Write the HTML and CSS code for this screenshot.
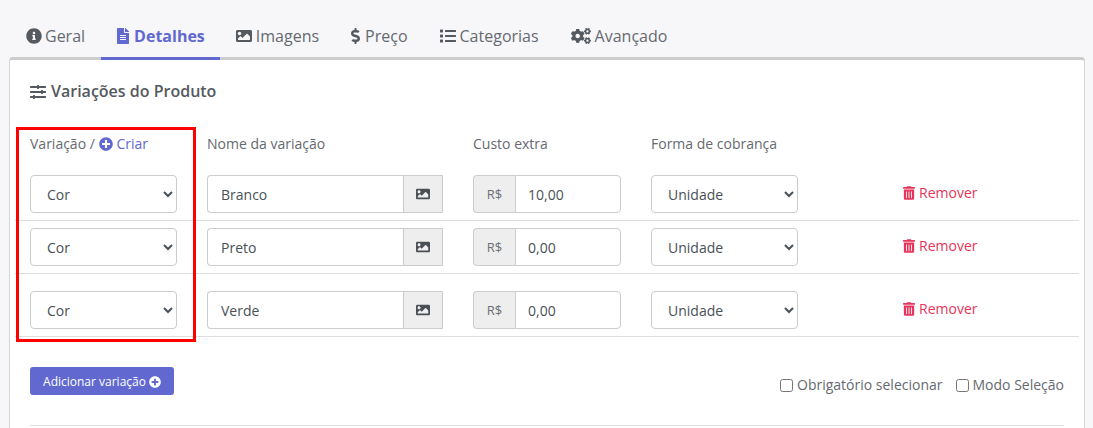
FILE: index.html
```html
<!DOCTYPE html>
<html lang="pt">
<head>
<meta charset="utf-8">
<title>Variações do Produto</title>
<link rel="stylesheet" href="styles.css">
</head>
<body>
<svg class="defs" aria-hidden="true">
  <symbol id="i-info" viewBox="0 0 512 512"><path d="M256 8C119.043 8 8 119.083 8 256c0 136.997 111.043 248 248 248s248-111.003 248-248C504 119.083 392.957 8 256 8zm0 110c23.196 0 42 18.804 42 42s-18.804 42-42 42-42-18.804-42-42 18.804-42 42-42zm56 254c0 6.627-5.373 12-12 12h-88c-6.627 0-12-5.373-12-12v-24c0-6.627 5.373-12 12-12h12v-64h-12c-6.627 0-12-5.373-12-12v-24c0-6.627 5.373-12 12-12h64c6.627 0 12 5.373 12 12v100h12c6.627 0 12 5.373 12 12v24z"/></symbol>
  <symbol id="i-file" viewBox="0 0 384 512"><path d="M224 136V0H24C10.7 0 0 10.7 0 24v464c0 13.3 10.7 24 24 24h336c13.3 0 24-10.7 24-24V160H248c-13.2 0-24-10.8-24-24zm64 236c0 6.6-5.4 12-12 12H108c-6.6 0-12-5.4-12-12v-8c0-6.6 5.4-12 12-12h168c6.6 0 12 5.4 12 12v8zm0-64c0 6.6-5.4 12-12 12H108c-6.6 0-12-5.4-12-12v-8c0-6.6 5.4-12 12-12h168c6.6 0 12 5.4 12 12v8zm0-72v8c0 6.6-5.4 12-12 12H108c-6.6 0-12-5.4-12-12v-8c0-6.6 5.4-12 12-12h168c6.6 0 12 5.4 12 12zm96-114.1v6.1H256V0h6.1c6.4 0 12.5 2.5 17 7l97.9 98c4.5 4.5 7 10.6 7 16.9z"/></symbol>
  <symbol id="i-image" viewBox="0 0 512 512"><path d="M464 448H48c-26.51 0-48-21.49-48-48V112c0-26.51 21.49-48 48-48h416c26.51 0 48 21.49 48 48v288c0 26.51-21.49 48-48 48zM112 120c-30.928 0-56 25.072-56 56s25.072 56 56 56 56-25.072 56-56-25.072-56-56-56zM64 384h384V272l-87.515-87.515c-4.686-4.686-12.284-4.686-16.971 0L208 320l-55.515-55.515c-4.686-4.686-12.284-4.686-16.971 0L64 336v48z"/></symbol>
  <symbol id="i-dollar" viewBox="0 0 288 512"><path d="M209.2 233.4l-108-31.6C88.7 198.2 80 186.5 80 173.5c0-16.3 13.2-29.5 29.5-29.5h66.3c12.2 0 24.2 3.7 34.2 10.5 6.1 4.1 14.3 3.1 19.5-2l34.8-34c7.1-6.9 6.1-18.4-1.8-24.5C238 74.8 207.4 64.1 176 64V16c0-8.8-7.2-16-16-16h-32c-8.8 0-16 7.2-16 16v48h-2.5C45.8 64-5.4 118.7.5 183.6c4.2 46.1 39.4 83.6 83.8 96.6l102.5 30c12.5 3.7 21.2 15.3 21.2 28.3 0 16.3-13.2 29.5-29.5 29.5h-66.3C100 368 88 364.3 78 357.5c-6.1-4.1-14.3-3.1-19.5 2l-34.8 34c-7.1 6.9-6.1 18.4 1.8 24.5 24.5 19.2 55.1 29.9 86.5 30v48c0 8.8 7.2 16 16 16h32c8.8 0 16-7.2 16-16v-48.2c46.6-.9 90.3-28.6 105.7-72.7 21.5-61.6-14.6-124.8-72.5-141.7z"/></symbol>
  <symbol id="i-list" viewBox="0 0 512 512"><path d="M80 368H16a16 16 0 0 0-16 16v64a16 16 0 0 0 16 16h64a16 16 0 0 0 16-16v-64a16 16 0 0 0-16-16zm0-320H16A16 16 0 0 0 0 64v64a16 16 0 0 0 16 16h64a16 16 0 0 0 16-16V64a16 16 0 0 0-16-16zm0 160H16a16 16 0 0 0-16 16v64a16 16 0 0 0 16 16h64a16 16 0 0 0 16-16v-64a16 16 0 0 0-16-16zm416 176H176a16 16 0 0 0-16 16v32a16 16 0 0 0 16 16h320a16 16 0 0 0 16-16v-32a16 16 0 0 0-16-16zm0-320H176a16 16 0 0 0-16 16v32a16 16 0 0 0 16 16h320a16 16 0 0 0 16-16V80a16 16 0 0 0-16-16zm0 160H176a16 16 0 0 0-16 16v32a16 16 0 0 0 16 16h320a16 16 0 0 0 16-16v-32a16 16 0 0 0-16-16z"/></symbol>
  <symbol id="i-cogs" viewBox="0 0 640 512"><path d="M512.1 191l-8.2 14.3c-3 5.3-9.4 7.5-15.1 5.4-11.8-4.4-22.6-10.7-32.1-18.6-4.6-3.8-5.8-10.5-2.8-15.7l8.2-14.3c-6.9-8-12.3-17.3-15.9-27.4h-16.5c-6 0-11.2-4.3-12.2-10.3-2-12-2.1-24.6 0-37.1 1-6 6.2-10.4 12.2-10.4h16.5c3.6-10.1 9-19.4 15.9-27.4l-8.2-14.3c-3-5.2-1.9-11.9 2.8-15.7 9.5-7.9 20.4-14.2 32.1-18.6 5.7-2.1 12.1.1 15.1 5.4l8.2 14.3c10.5-1.9 21.2-1.9 31.7 0L552 6.3c3-5.3 9.4-7.5 15.1-5.4 11.8 4.4 22.6 10.7 32.1 18.6 4.6 3.8 5.8 10.5 2.8 15.7l-8.2 14.3c6.9 8 12.3 17.3 15.9 27.4h16.5c6 0 11.2 4.3 12.2 10.3 2 12 2.1 24.6 0 37.1-1 6-6.2 10.4-12.2 10.4h-16.5c-3.6 10.1-9 19.4-15.9 27.4l8.2 14.3c3 5.2 1.9 11.9-2.8 15.7-9.5 7.9-20.4 14.2-32.1 18.6-5.7 2.1-12.1-.1-15.1-5.4l-8.2-14.3c-10.4 1.9-21.2 1.9-31.7 0zm-10.5-58.8c38.5 29.6 82.4-14.3 52.8-52.8-38.5-29.7-82.4 14.3-52.8 52.8zM386.3 286.1l33.7 16.8c10.1 5.8 14.5 18.1 10.5 29.1-8.9 24.2-26.4 46.4-42.6 65.8-7.4 8.9-20.2 11.1-30.3 5.3l-29.1-16.8c-16 13.7-34.6 24.6-54.9 31.7v33.6c0 11.6-8.3 21.6-19.7 23.6-24.6 4.2-50.4 4.4-75.9 0-11.5-2-20-11.9-20-23.6V418c-20.3-7.2-38.9-18-54.9-31.7L74 403c-10 5.8-22.9 3.6-30.3-5.3-16.2-19.4-33.3-41.6-42.2-65.7-4-10.9.4-23.2 10.5-29.1l33.3-16.8c-3.9-20.9-3.9-42.4 0-63.4L12 205.8c-10.1-5.8-14.6-18.1-10.5-29 8.9-24.2 26-46.4 42.2-65.8 7.4-8.9 20.2-11.1 30.3-5.3l29.1 16.8c16-13.7 34.6-24.6 54.9-31.7V57.1c0-11.5 8.2-21.5 19.6-23.5 24.6-4.2 50.5-4.4 76-.1 11.5 2 20 11.9 20 23.6v33.6c20.3 7.2 38.9 18 54.9 31.7l29.1-16.8c10-5.8 22.9-3.6 30.3 5.3 16.2 19.4 33.2 41.6 42.1 65.8 4 10.9.1 23.2-10 29.1l-33.7 16.8c3.9 21 3.9 42.5 0 63.5zm-117.6 21.1c59.2-77-28.7-164.9-105.7-105.7-59.2 77 28.7 164.9 105.7 105.7zm243.4 182.7l-8.2 14.3c-3 5.3-9.4 7.5-15.1 5.4-11.8-4.4-22.6-10.7-32.1-18.6-4.6-3.8-5.8-10.5-2.8-15.7l8.2-14.3c-6.9-8-12.3-17.3-15.9-27.4h-16.5c-6 0-11.2-4.3-12.2-10.3-2-12-2.1-24.6 0-37.1 1-6 6.2-10.4 12.2-10.4h16.5c3.6-10.1 9-19.4 15.9-27.4l-8.2-14.3c-3-5.2-1.9-11.9 2.8-15.7 9.5-7.9 20.4-14.2 32.1-18.6 5.7-2.1 12.1.1 15.1 5.4l8.2 14.3c10.5-1.9 21.2-1.9 31.7 0l8.2-14.3c3-5.3 9.4-7.5 15.1-5.4 11.8 4.4 22.6 10.7 32.1 18.6 4.6 3.8 5.8 10.5 2.8 15.7l-8.2 14.3c6.9 8 12.3 17.3 15.9 27.4h16.5c6 0 11.2 4.3 12.2 10.3 2 12 2.1 24.6 0 37.1-1 6-6.2 10.4-12.2 10.4h-16.5c-3.6 10.1-9 19.4-15.9 27.4l8.2 14.3c3 5.2 1.9 11.9-2.8 15.7-9.5 7.9-20.4 14.2-32.1 18.6-5.7 2.1-12.1-.1-15.1-5.4l-8.2-14.3c-10.4 1.9-21.2 1.9-31.7 0zM501.6 431c38.5 29.6 82.4-14.3 52.8-52.8-38.5-29.6-82.4 14.3-52.8 52.8z"/></symbol>
  <symbol id="i-sliders" viewBox="0 0 512 512"><path d="M496 384H160v-16c0-8.8-7.2-16-16-16h-32c-8.8 0-16 7.2-16 16v16H16c-8.8 0-16 7.2-16 16v32c0 8.8 7.2 16 16 16h80v16c0 8.8 7.2 16 16 16h32c8.8 0 16-7.2 16-16v-16h336c8.8 0 16-7.2 16-16v-32c0-8.8-7.2-16-16-16zm0-160h-80v-16c0-8.8-7.2-16-16-16h-32c-8.8 0-16 7.2-16 16v16H16c-8.8 0-16 7.2-16 16v32c0 8.8 7.2 16 16 16h336v16c0 8.8 7.2 16 16 16h32c8.8 0 16-7.2 16-16v-16h80c8.8 0 16-7.2 16-16v-32c0-8.8-7.2-16-16-16zm0-160H288V48c0-8.8-7.2-16-16-16h-32c-8.8 0-16 7.2-16 16v16H16C7.2 64 0 71.2 0 80v32c0 8.8 7.2 16 16 16h208v16c0 8.8 7.2 16 16 16h32c8.8 0 16-7.2 16-16v-16h208c8.8 0 16-7.2 16-16V80c0-8.8-7.2-16-16-16z"/></symbol>
  <symbol id="i-plus" viewBox="0 0 512 512"><path d="M256 8C119 8 8 119 8 256s111 248 248 248 248-111 248-248S393 8 256 8zm144 276c0 6.6-5.4 12-12 12h-92v92c0 6.6-5.4 12-12 12h-56c-6.6 0-12-5.4-12-12v-92h-92c-6.6 0-12-5.4-12-12v-56c0-6.6 5.4-12 12-12h92v-92c0-6.6 5.4-12 12-12h56c6.6 0 12 5.4 12 12v92h92c6.6 0 12 5.4 12 12v56z"/></symbol>
  <symbol id="i-trash" viewBox="0 0 448 512"><path d="M32 464a48 48 0 0 0 48 48h288a48 48 0 0 0 48-48V128H32zm272-256a16 16 0 0 1 32 0v224a16 16 0 0 1-32 0zm-96 0a16 16 0 0 1 32 0v224a16 16 0 0 1-32 0zm-96 0a16 16 0 0 1 32 0v224a16 16 0 0 1-32 0zM432 32H312l-9.4-18.7A24 24 0 0 0 281.1 0H166.8a23.72 23.72 0 0 0-21.4 13.3L136 32H16A16 16 0 0 0 0 48v32a16 16 0 0 0 16 16h416a16 16 0 0 0 16-16V48a16 16 0 0 0-16-16z"/></symbol>
</svg>

<nav class="tabs">
  <a class="tab"><svg class="ico ico-tab"><use href="#i-info"/></svg>Geral</a>
  <a class="tab active"><svg class="ico ico-file"><use href="#i-file"/></svg>Detalhes</a>
  <a class="tab"><svg class="ico ico-16"><use href="#i-image"/></svg>Imagens</a>
  <a class="tab"><svg class="ico ico-dollar"><use href="#i-dollar"/></svg>Preço</a>
  <a class="tab"><svg class="ico ico-16"><use href="#i-list"/></svg>Categorias</a>
  <a class="tab"><svg class="ico ico-cogs"><use href="#i-cogs"/></svg>Avançado</a>
</nav>

<main class="card">
  <h2 class="title"><svg class="ico ico-16"><use href="#i-sliders"/></svg>Variações do Produto</h2>

  <div class="grid head">
    <div>Variação / <a class="create"><svg class="ico ico-plus"><use href="#i-plus"/></svg>Criar</a></div>
    <div>Nome da variação</div>
    <div>Custo extra</div>
    <div>Forma de cobrança</div>
  </div>

  <div class="grid row row-first">
    <select class="field"><option>Cor</option></select>
    <div class="group">
      <input class="field in-left" value="Branco">
      <span class="addon addon-right"><svg class="ico ico-14 dark"><use href="#i-image"/></svg></span>
    </div>
    <div class="group">
      <span class="addon addon-left">R$</span>
      <input class="field in-right" value="10,00">
    </div>
    <select class="field"><option>Unidade</option></select>
    <a class="remove"><svg class="ico ico-trash"><use href="#i-trash"/></svg>Remover</a>
  </div>

  <div class="grid row">
    <select class="field"><option>Cor</option></select>
    <div class="group">
      <input class="field in-left" value="Preto">
      <span class="addon addon-right"><svg class="ico ico-14 dark"><use href="#i-image"/></svg></span>
    </div>
    <div class="group">
      <span class="addon addon-left">R$</span>
      <input class="field in-right" value="0,00">
    </div>
    <select class="field"><option>Unidade</option></select>
    <a class="remove"><svg class="ico ico-trash"><use href="#i-trash"/></svg>Remover</a>
  </div>

  <div class="grid row row-last">
    <select class="field"><option>Cor</option></select>
    <div class="group">
      <input class="field in-left" value="Verde">
      <span class="addon addon-right"><svg class="ico ico-14 dark"><use href="#i-image"/></svg></span>
    </div>
    <div class="group">
      <span class="addon addon-left">R$</span>
      <input class="field in-right" value="0,00">
    </div>
    <select class="field"><option>Unidade</option></select>
    <a class="remove"><svg class="ico ico-trash"><use href="#i-trash"/></svg>Remover</a>
  </div>

  <div class="footer">
    <button class="btn" type="button">Adicionar variação<svg class="ico ico-12"><use href="#i-plus"/></svg></button>
    <div class="checks">
      <label class="check"><input type="checkbox">Obrigatório selecionar</label>
      <label class="check"><input type="checkbox">Modo Seleção</label>
    </div>
  </div>
  <hr class="divider">

  <div class="highlight"></div>
</main>
</body>
</html>
```

FILE: styles.css
```css
* { box-sizing: border-box; }
body {
  margin: 0;
  height: 428px;
  overflow: hidden;
  background: #f7f7fa;
  font-family: "Open Sans", sans-serif;
  font-size: 14px;
  color: #666a70;
}
.defs { position: absolute; width: 0; height: 0; }
.ico { fill: currentColor; flex: none; display: inline-block; vertical-align: -2px; }
.ico-16 { width: 16px; height: 16px; margin-right: 4px; }
.ico-tab { width: 16px; height: 16px; margin-right: 3px; }
.ico-file { width: 12px; height: 16px; margin-right: 5px; }
.ico-dollar { width: 9px; height: 16px; margin-right: 5px; }
.ico-cogs { width: 20px; height: 16px; margin-right: 4px; }
.ico-14 { width: 14px; height: 14px; margin-right: 3px; }
.ico-plus { width: 14px; height: 14px; margin-left: 1px; margin-right: 3px; }
.ico-12 { width: 12px; height: 12px; margin-left: 3px; vertical-align: -2px; }
.ico-trash { width: 12px; height: 14px; margin-right: 4px; }
.dark { margin: 0; color: #4a4f55; }

.tabs { display: flex; padding-left: 10px; height: 60px; position: relative; z-index: 1; }
.tab {
  padding: 24px 16px 9px;
  height: 60px;
  line-height: 24px;
  font-size: 16px;
  color: #666a70;
  border-bottom: 3px solid transparent;
  white-space: nowrap;
}
.tab .ico { color: #555960; }
.tab.active { padding-right: 15px; color: #6169d0; font-weight: 700; border-bottom-color: #6169d0; }
.tab.active .ico { color: #6169d0; }

.card {
  position: relative;
  margin: -3px 8px 0 9px;
  height: 371px;
  overflow: hidden;
  padding: 0 5px;
  background: #fff;
  border: 1px solid #d5d5d5;
  border-top: 3px solid #ccc;
  border-bottom: 0;
  border-radius: 4px 4px 0 0;
}
.title {
  margin: 0 0 0 15px;
  padding-top: 20px;
  font-size: 16px;
  line-height: 22px;
  font-weight: 600;
  color: #555960;
}
.title .ico { margin-right: 5px; vertical-align: -3px; }

.grid {
  display: grid;
  grid-template-columns: 147px 236px 148px 147px 1fr;
  column-gap: 30px;
  padding-left: 15px;
  align-items: center;
}
.head { margin-top: 32px; line-height: 20px; }
.create { color: #6169d0; }
.row { padding-top: 7px; padding-bottom: 7px; border-bottom: 1px solid #dedede; }
.row-first { padding-top: 21px; }
.row-last { padding-top: 17px; }

.field {
  height: 38px;
  width: 100%;
  padding: 0 12px;
  background: #fff;
  border: 1px solid #ccc;
  border-radius: 4px;
  font-family: "Open Sans", sans-serif;
  font-size: 14px;
  color: #495057;
  outline: none;
}
input.field { padding: 0 13px; }
input.in-right { padding: 0 12px; }
.group { display: flex; height: 38px; }
.group .field { flex: 1; min-width: 0; }
.in-left { border-right: 0; border-radius: 4px 0 0 4px; }
.in-right { border-radius: 0 4px 4px 0; }
.addon {
  display: flex;
  align-items: center;
  justify-content: center;
  background: #eee;
  border: 1px solid #ccc;
  font-size: 13px;
  color: #6b6f75;
}
.addon-right { width: 40px; }
.addon-left { width: 42px; border-right: 0; border-radius: 4px 0 0 4px; }

.remove { padding-left: 75px; margin-top: -2px; color: #e8345a; line-height: 20px; white-space: nowrap; }

.footer {
  display: flex;
  justify-content: space-between;
  align-items: flex-end;
  margin: 30px 15px 0;
}
.btn {
  height: 28px;
  width: 144px;
  padding: 0;
  border: 0;
  border-radius: 3px;
  background: #6169d0;
  color: #fff;
  font-family: "Open Sans", sans-serif;
  font-size: 12px;
}
.checks { display: flex; gap: 13px; line-height: 20px; }
.check { display: flex; align-items: center; }
.check input { width: 13px; height: 13px; margin: 0 4px 0 0; }
.divider { margin: 30px 15px 0; border: 0; border-top: 1px solid #dedede; }

.highlight {
  position: absolute;
  left: 6px;
  top: 67px;
  width: 180px;
  height: 215px;
  border: 3px solid #f00;
  pointer-events: none;
}
```
